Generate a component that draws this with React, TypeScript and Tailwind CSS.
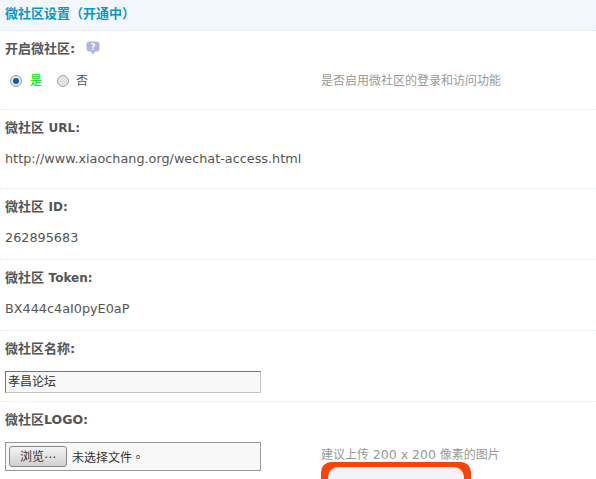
const font = "font-['DejaVu_Sans','Noto_Sans_CJK_SC',sans-serif]";

function Label({ children }: { children: React.ReactNode }) {
  return <div className="h-[33px] pt-[9px] text-[13px] leading-[18px] font-bold text-[#555]">{children}</div>;
}

function Row({ h, label, latin, value }: { h: string; label: string; latin: string; value: string }) {
  return (
    <div className={`${h} border-b border-dotted border-[#d8ebf8] px-[5px]`}>
      <Label>
        {label} <span className="text-[12px]">{latin}</span>
      </Label>
      <div className="pt-[7px] text-[12.8px] leading-[18px] text-[#555]">{value}</div>
    </div>
  );
}

export default function App() {
  return (
    <div className={`relative h-[479px] w-[596px] overflow-hidden bg-white ${font}`}>
      <div className="h-[31px] border-b border-dotted border-[#d8ebf8] bg-[#f1f7fd] pl-[5px] pt-[5px] text-[13px] leading-[18px] font-bold text-[#0a96c8]">
        微社区设置（开通中）
      </div>

      <div className="h-[79px] border-b border-dotted border-[#d8ebf8] px-[5px]">
        <div className="flex h-[33px] items-start gap-[11px] pt-[9px] text-[13px] leading-[18px] font-bold text-[#555]">
          <span>开启微社区:</span>
          <svg width="14" height="14" viewBox="0 0 14 14" className="mt-[1px]">
            <path d="M3.5 0.5h7a3 3 0 0 1 3 3v4a3 3 0 0 1-3 3H9L7 13.5 5 10.5H3.5a3 3 0 0 1-3-3v-4a3 3 0 0 1 3-3z" fill="#adb4e0" />
            <text x="7" y="8.5" textAnchor="middle" fontSize="8" fontWeight="bold" fill="#fff">?</text>
          </svg>
        </div>
        <div className="mt-[7px] flex h-[20px] items-center pl-[5px] text-[12px] text-[#555]">
          <span className="flex h-[12px] w-[12px] items-center justify-center rounded-full border border-[#9a9a9a] bg-[#e8e8e8]">
            <span className="h-[6px] w-[6px] rounded-full bg-[#0b5f9e]" />
          </span>
          <span className="ml-[8px] text-[#00dd00]">是</span>
          <span className="ml-[15px] h-[12px] w-[12px] rounded-full border border-[#a8a8a8] bg-[#e4e4e4]" />
          <span className="ml-[7px]">否</span>
          <span className="ml-[233px] text-[#999]">是否启用微社区的登录和访问功能</span>
        </div>
      </div>

      <Row h="h-[79px]" label="微社区" latin="URL:" value="http://www.xiaochang.org/wechat-access.html" />
      <Row h="h-[71px]" label="微社区" latin="ID:" value="262895683" />
      <Row h="h-[71px]" label="微社区" latin="Token:" value="BX444c4aI0pyE0aP" />

      <div className="h-[71px] border-b border-dotted border-[#d8ebf8] px-[5px]">
        <Label>微社区名称:</Label>
        <div className="mt-[7px] h-[22px] w-[256px] border border-t-[#777] border-l-[#777] border-r-[#c4c4c4] border-b-[#c4c4c4] bg-[#f8f8f8] pl-[2px] text-[12px] leading-[20px] text-[#333]">
          孝昌论坛
        </div>
      </div>

      <div className="px-[5px]">
        <Label>
          微社区<span className="text-[12.5px]">LOGO:</span>
        </Label>
        <div className="mt-[7px] flex items-start">
          <div className="flex h-[29px] w-[256px] shrink-0 items-center border border-[#999] bg-[#f8f8f8] pl-[3px] text-[12px] text-[#333]">
            <span className="flex h-[21px] w-[58px] items-center justify-center rounded-[3px] border border-[#888] bg-gradient-to-b from-[#f4f4f4] to-[#d0d0d0] font-['DejaVu_Sans','Noto_Sans_CJK_TC',sans-serif]">浏览⋯</span>
            <span className="ml-[5px] font-['Noto_Sans_CJK_TC',sans-serif]">未选择文件。</span>
          </div>
          <div className="ml-[60px] text-[#999]">
            <div className="h-[20px] pt-[5px] text-[12px] leading-[15px]">建议上传 <span className="text-[12.5px]">200 x 200</span> 像素的图片</div>
            <div className="h-[40px] w-[150px] rounded-t-[10px] bg-[#fb4207] px-[7px] pt-[5px]">
              <div className="h-full rounded-t-[10px] bg-[#f2f3f8]" />
            </div>
          </div>
        </div>
      </div>
    </div>
  );
}
